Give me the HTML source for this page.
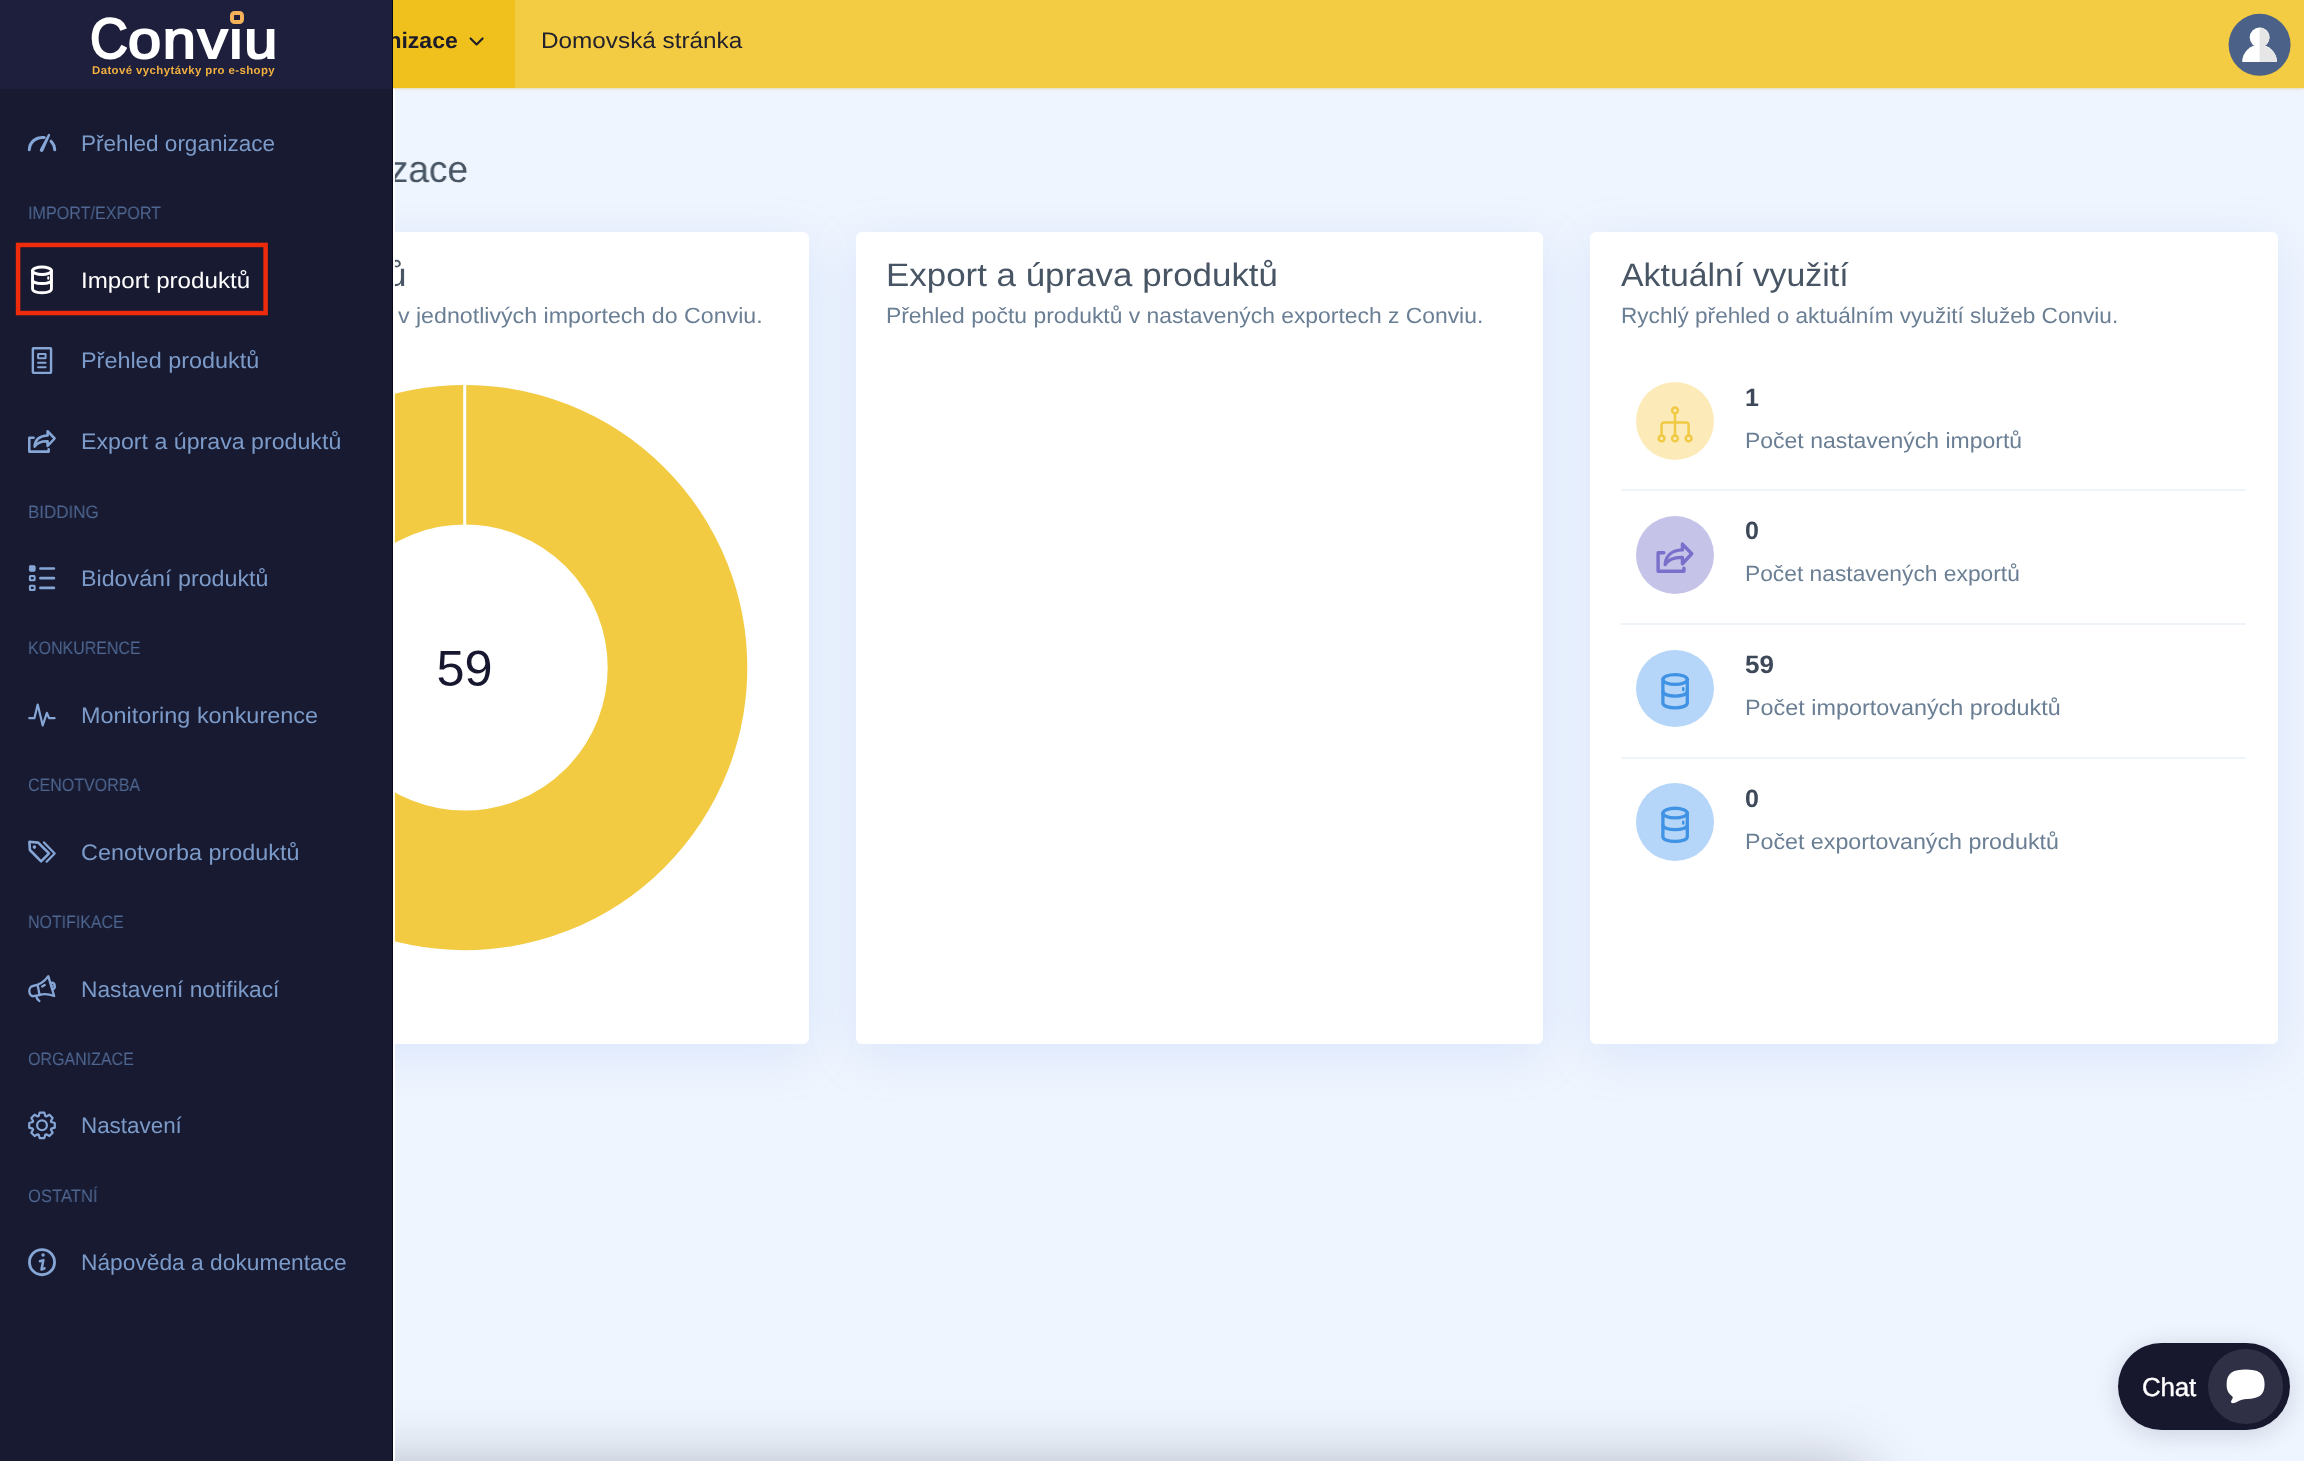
<!DOCTYPE html>
<html lang="cs">
<head>
<meta charset="utf-8">
<title>Conviu – Přehled organizace</title>
<style>
html,body{margin:0;padding:0;}
body{width:2304px;height:1461px;overflow:hidden;position:relative;background:#eff5fe;font-family:"Liberation Sans",sans-serif;}
.t{position:absolute;white-space:nowrap;line-height:1;will-change:transform;text-rendering:geometricPrecision;font-family:"Liberation Sans",sans-serif;}
#header{position:absolute;left:0;top:0;width:2304px;height:88px;background:#f4cc43;box-shadow:0 1px 2.5px rgba(215,195,120,.55);}
#tab{position:absolute;left:300px;top:0;width:214.5px;height:88px;background:#f0c11c;}
.card{position:absolute;top:232px;height:812px;width:687.5px;background:#fff;border-radius:6px;box-shadow:0 11px 50px rgba(120,160,238,.18);}
#sidebar{position:absolute;left:0;top:0;width:392.2px;height:1461px;background:#171a31;overflow:hidden;border-right:1px solid #07071c;}
#logo{position:absolute;left:0;top:0;width:393px;height:88.5px;background:#1e1f3d;}
.ic{position:absolute;left:0;top:0;}
.sep{position:absolute;left:1621px;width:625px;height:2px;background:#eff4fb;}
.circ{position:absolute;left:1636.1px;width:77.8px;height:77.6px;border-radius:50%;}
#chat{position:absolute;left:2117.5px;top:1342.8px;width:172.5px;height:87px;border-radius:44px;background:#17172e;box-shadow:0 4px 24px rgba(40,50,90,.18);}
#chatc{position:absolute;left:2208.3px;top:1349px;width:74.6px;height:74.6px;border-radius:50%;background:#2f3045;}
#botshadow{position:absolute;left:110px;top:1486px;width:1740px;height:30px;border-radius:40px;box-shadow:0 0 60px 22px rgba(60,65,85,.34);}
</style>
</head>
<body>
<div id="header"><div id="tab"></div></div>

<div class="card" style="left:121.5px"></div>
<div class="card" style="left:855.8px"></div>
<div class="card" style="left:1589.9px;width:688px"></div>

<!-- donut -->
<svg class="ic" width="2304" height="1461" viewBox="0 0 2304 1461">
  <circle cx="464.7" cy="667.6" r="212.8" fill="none" stroke="#f2cb43" stroke-width="139.6"/>
  <rect x="463.2" y="380" width="3" height="147" fill="#fff"/>
  <text x="464.5" y="686" text-anchor="middle" font-family="Liberation Sans, sans-serif" font-size="50.4" fill="#17172f">59</text>
  <!-- header chevron -->
  <path d="M470.6 38.4 L476.6 44.4 L482.6 38.4" fill="none" stroke="#1c1c2a" stroke-width="2.1" stroke-linecap="round" stroke-linejoin="round"/>
  <!-- avatar -->
  <circle cx="2259.6" cy="44.8" r="31" fill="#4c6188"/>
  <circle cx="2259.6" cy="37.4" r="9.9" fill="#fff"/>
  <path d="M2242.2 62 A17.4 17.4 0 0 1 2277 62 Z" fill="#fff"/>
  <path d="M2259.6 27.5 A9.9 9.9 0 0 1 2264.5 46 A17.4 17.4 0 0 1 2277 62 L2259.6 62 Z" fill="#e6e6e6"/>
</svg>

<div class="t" style="top:30px;font-size:22.4px;color:#23222c;left:541.30px;transform:scaleX(1.0856);transform-origin:0 0;">Domovská stránka</div>
<div class="t" style="top:30px;font-size:22.4px;color:#1c1c2a;font-weight:700;right:1846.30px;transform:scaleX(1.0272);transform-origin:100% 0;">Organizace</div>
<div class="t" style="top:151px;font-size:37.5px;color:#485564;right:1836.10px;transform:scaleX(0.9903);transform-origin:100% 0;">Přehled organizace</div>
<div class="t" style="top:259px;font-size:32.5px;color:#485564;right:1897.50px;transform:scaleX(1.1115);transform-origin:100% 0;">Import produktů</div>
<div class="t" style="top:305px;font-size:22.0px;color:#6a7e94;right:1541.50px;transform:scaleX(1.0540);transform-origin:100% 0;">Přehled počtu produktů v jednotlivých importech do Conviu.</div>
<div class="t" style="top:259px;font-size:32.5px;color:#485564;left:886.00px;transform:scaleX(1.0741);transform-origin:0 0;">Export a úprava produktů</div>
<div class="t" style="top:305px;font-size:22.0px;color:#6a7e94;left:886.30px;transform:scaleX(1.0391);transform-origin:0 0;">Přehled počtu produktů v nastavených exportech z Conviu.</div>
<div class="t" style="top:259px;font-size:32.5px;color:#485564;left:1621.00px;transform:scaleX(1.0413);transform-origin:0 0;">Aktuální využití</div>
<div class="t" style="top:305px;font-size:22.0px;color:#6a7e94;left:1620.60px;transform:scaleX(1.0268);transform-origin:0 0;">Rychlý přehled o aktuálním využití služeb Conviu.</div>
<div class="t" style="top:386px;font-size:25.0px;color:#3d4858;font-weight:700;left:1745.00px;">1</div>
<div class="t" style="top:430px;font-size:22.0px;color:#6a7e94;left:1744.90px;transform:scaleX(1.0442);transform-origin:0 0;">Počet nastavených importů</div>
<div class="t" style="top:519px;font-size:25.0px;color:#3d4858;font-weight:700;left:1745.00px;">0</div>
<div class="t" style="top:563px;font-size:22.0px;color:#6a7e94;left:1744.90px;transform:scaleX(1.0355);transform-origin:0 0;">Počet nastavených exportů</div>
<div class="t" style="top:653px;font-size:25.0px;color:#3d4858;font-weight:700;left:1745.00px;transform:scaleX(1.0427);transform-origin:0 0;">59</div>
<div class="t" style="top:697px;font-size:22.0px;color:#6a7e94;left:1744.90px;transform:scaleX(1.0627);transform-origin:0 0;">Počet importovaných produktů</div>
<div class="t" style="top:787px;font-size:25.0px;color:#3d4858;font-weight:700;left:1745.00px;">0</div>
<div class="t" style="top:831px;font-size:22.0px;color:#6a7e94;left:1744.90px;transform:scaleX(1.0562);transform-origin:0 0;">Počet exportovaných produktů</div>

<!-- card 3 rows -->
<div class="sep" style="top:489.3px"></div>
<div class="sep" style="top:622.9px"></div>
<div class="sep" style="top:756.6px"></div>
<div class="circ" style="top:382.3px;background:#fcebb9"></div>
<div class="circ" style="top:516.3px;background:#c6c3e8"></div>
<div class="circ" style="top:649.8px;background:#b5d6f8"></div>
<div class="circ" style="top:783.4px;background:#b5d6f8"></div>
<svg class="ic" width="2304" height="1461" viewBox="0 0 2304 1461" fill="none" stroke-linecap="round" stroke-linejoin="round">
  <!-- sitemap -->
  <g stroke="#f0c945" stroke-width="2.5">
    <circle cx="1675" cy="410.4" r="2.9"/>
    <circle cx="1661.6" cy="438.4" r="2.9"/>
    <circle cx="1675" cy="438.4" r="2.9"/>
    <circle cx="1688.6" cy="438.4" r="2.9"/>
    <path d="M1675 413.6 V435.2 M1661.6 435.2 V425 Q1661.6 422.4 1664.2 422.4 H1686 Q1688.6 422.4 1688.6 425 V435.2"/>
  </g>
  <!-- export purple: sidebar icon scaled 1.33 about its centre -->
  <g transform="translate(1675 557.9) scale(1.33) translate(-42 -441.6)" stroke="#7a70cc" stroke-width="2.55">
    <path d="M33.6 437.7 H29.3 V451.6 H48.7 V449.3"/>
    <path d="M47.6 431.2 L54.6 438.5 L47.6 446 V441.2 C41.2 441 37 443 34.6 446.6 C35 440.2 39.4 435.9 47.6 435.6 Z"/>
  </g>
  <!-- db blue x2 : sidebar icon scaled 1.29 about (42,279.85) -->
  <g id="dbb" transform="translate(1675.1 691.3) scale(1.29) translate(-42 -279.85)" stroke="#3f92e4" stroke-width="2.55">
    <ellipse cx="42" cy="270.7" rx="9.45" ry="3.75"/>
    <path d="M32.55 270.7 V289 C32.55 293.9 51.45 293.9 51.45 289 V270.7"/>
    <path d="M32.55 279.9 C32.55 284.8 51.45 284.8 51.45 279.9"/>
    <path d="M48.3 277.4 V278.8" stroke-width="1.9"/>
  </g>
  <g transform="translate(1675.1 824.9) scale(1.29) translate(-42 -279.85)" stroke="#3f92e4" stroke-width="2.55">
    <ellipse cx="42" cy="270.7" rx="9.45" ry="3.75"/>
    <path d="M32.55 270.7 V289 C32.55 293.9 51.45 293.9 51.45 289 V270.7"/>
    <path d="M32.55 279.9 C32.55 284.8 51.45 284.8 51.45 279.9"/>
    <path d="M48.3 277.4 V278.8" stroke-width="1.9"/>
  </g>
</svg>

<!-- chat -->
<div id="chat"></div><div id="chatc"></div>
<div class="t" style="left:2142px;top:1374.1px;font-size:26px;color:#fff;-webkit-text-stroke:0.4px #fff;letter-spacing:-0.2px">Chat</div>
<svg class="ic" width="2304" height="1461" viewBox="0 0 2304 1461">
  <path d="M2245.8 1369.4 C2258 1369.4 2264.6 1372.5 2264.6 1384.3 C2264.6 1395.5 2258.5 1398.6 2247 1399 C2243 1399.2 2240.5 1399.8 2237.6 1401.6 C2235 1403.2 2232.2 1404 2231.2 1402.6 C2230.4 1401.4 2231.8 1400 2232.6 1398.2 C2233 1397.2 2232.6 1396.6 2231.6 1395.8 C2228 1393.2 2226.6 1389.6 2226.6 1384.3 C2226.6 1372.5 2233.6 1369.4 2245.8 1369.4 Z" fill="#fff"/>
</svg>

<div id="botshadow"></div>

<div style="position:absolute;left:393px;top:89px;width:2.3px;height:1372px;background:rgba(255,255,255,.92)"></div>
<!-- sidebar -->
<div id="sidebar">
  <div id="logo"></div>
  <div class="t" id="brand" style="left:89.5px;top:10.5px;font-size:57px;color:#fff;-webkit-text-stroke:2px #fff;"><span style="display:inline-block;transform:scaleX(0.92);transform-origin:0 0">C</span><span style="display:inline-block;font-size:53px;letter-spacing:1.6px;transform:scaleX(1.122);transform-origin:0 0;margin-left:-3.1px">onviu</span></div>
  <div style="position:absolute;left:229px;top:9px;width:16px;height:18px;background:#1e1f3d"></div>
  <div style="position:absolute;left:229.6px;top:10.8px;width:6px;height:5.4px;border:4px solid #f3b158;border-radius:4.5px"></div>
  <div class="t" style="left:92px;top:65.5px;font-size:11.4px;font-weight:700;color:#f2b03e;letter-spacing:0.42px">Datové vychytávky pro e-shopy</div>
<div class="t" style="top:133px;font-size:22.4px;color:#7c9bc9;left:81.00px;transform:scaleX(1.0055);transform-origin:0 0;">Přehled organizace</div>
<div class="t" style="top:270px;font-size:22.4px;color:#ffffff;left:81.00px;transform:scaleX(1.0784);transform-origin:0 0;">Import produktů</div>
<div class="t" style="top:350px;font-size:22.4px;color:#7c9bc9;left:81.00px;transform:scaleX(1.0449);transform-origin:0 0;">Přehled produktů</div>
<div class="t" style="top:431px;font-size:22.4px;color:#7c9bc9;left:81.00px;transform:scaleX(1.0352);transform-origin:0 0;">Export a úprava produktů</div>
<div class="t" style="top:568px;font-size:22.4px;color:#7c9bc9;left:81.00px;transform:scaleX(1.0388);transform-origin:0 0;">Bidování produktů</div>
<div class="t" style="top:705px;font-size:22.4px;color:#7c9bc9;left:81.00px;transform:scaleX(1.0462);transform-origin:0 0;">Monitoring konkurence</div>
<div class="t" style="top:842px;font-size:22.4px;color:#7c9bc9;left:81.00px;transform:scaleX(1.0444);transform-origin:0 0;">Cenotvorba produktů</div>
<div class="t" style="top:979px;font-size:22.4px;color:#7c9bc9;left:81.00px;transform:scaleX(1.0153);transform-origin:0 0;">Nastavení notifikací</div>
<div class="t" style="top:1115px;font-size:22.4px;color:#7c9bc9;left:81.00px;">Nastavení</div>
<div class="t" style="top:1252px;font-size:22.4px;color:#7c9bc9;left:81.00px;transform:scaleX(1.0167);transform-origin:0 0;">Nápověda a dokumentace</div>
<div class="t" style="top:204px;font-size:18.0px;color:#4f6791;left:28.00px;transform:scaleX(0.8965);transform-origin:0 0;">IMPORT/EXPORT</div>
<div class="t" style="top:503px;font-size:18.0px;color:#4f6791;left:28.00px;transform:scaleX(0.9425);transform-origin:0 0;">BIDDING</div>
<div class="t" style="top:639px;font-size:18.0px;color:#4f6791;left:28.00px;transform:scaleX(0.8864);transform-origin:0 0;">KONKURENCE</div>
<div class="t" style="top:776px;font-size:18.0px;color:#4f6791;left:28.00px;transform:scaleX(0.8895);transform-origin:0 0;">CENOTVORBA</div>
<div class="t" style="top:913px;font-size:18.0px;color:#4f6791;left:28.00px;transform:scaleX(0.8860);transform-origin:0 0;">NOTIFIKACE</div>
<div class="t" style="top:1050px;font-size:18.0px;color:#4f6791;left:28.00px;transform:scaleX(0.8890);transform-origin:0 0;">ORGANIZACE</div>
<div class="t" style="top:1187px;font-size:18.0px;color:#4f6791;left:28.00px;transform:scaleX(0.9238);transform-origin:0 0;">OSTATNÍ</div>
  <svg class="ic" width="393" height="1461" viewBox="0 0 393 1461" fill="none" stroke="#86a6d6" stroke-linecap="round" stroke-linejoin="round">
    <rect x="18.1" y="244.95" width="247.5" height="68.1" stroke="#ee2c0c" stroke-width="4.5" stroke-linejoin="miter" fill="none"/>
    <!-- gauge -->
    <g stroke-width="3">
      <path d="M29.3 149.7 A12.7 12.7 0 0 1 44.2 137.6"/>
      <path d="M51 141.2 A12.7 12.7 0 0 1 54.7 149.7"/>
    </g>
    <path d="M39.99 149.17 L47.92 134.47 A1.2 1.2 0 0 1 50.08 135.53 L43.41 150.83 A1.9 1.9 0 0 1 39.99 149.17 Z" fill="#86a6d6" stroke="none"/>
    <!-- database (active, white) -->
    <g stroke="#fff" stroke-width="2.9">
      <ellipse cx="42" cy="270.7" rx="9.45" ry="3.75"/>
      <path d="M32.55 270.7 V289 C32.55 293.9 51.45 293.9 51.45 289 V270.7"/>
      <path d="M32.55 279.9 C32.55 284.8 51.45 284.8 51.45 279.9"/>
      <path d="M48.3 277.4 V278.8" stroke-width="2.1"/>
    </g>
    <!-- document -->
    <rect x="32.85" y="348.2" width="18.2" height="24.7" rx="0.6" stroke-width="2.4"/>
    <rect x="38.1" y="354" width="7.5" height="4.3" rx="0.4" stroke-width="2"/>
    <path d="M38 362.8 H45.6 M38 367.2 H45.6" stroke-width="2" />
    <!-- export -->
    <g stroke-width="2.55">
      <path d="M33.6 437.7 H29.3 V451.6 H48.7 V449.3"/>
      <path d="M47.6 431.2 L54.6 438.5 L47.6 446 V441.2 C41.2 441 37 443 34.6 446.6 C35 440.2 39.4 435.9 47.6 435.6 Z"/>
    </g>
    <!-- list -->
    <rect x="29.4" y="565.8" width="5.7" height="5.4" rx="0.8" fill="#86a6d6" stroke-width="1"/>
    <rect x="29.9" y="576" width="4.7" height="4.3" rx="0.5" stroke-width="2"/>
    <rect x="29.9" y="585.7" width="4.7" height="4.4" rx="0.5" stroke-width="2"/>
    <path d="M40.4 568.5 H53.9 M40.4 578.2 H53.9 M40.4 587.9 H53.9" stroke-width="2.7"/>
    <!-- pulse -->
    <path d="M29.3 718.2 H34.4 L37.7 704.6 L42.7 725.4 L46.9 712.8 L49.1 718.2 H54.6" stroke-width="2.2"/>
    <!-- tags -->
    <path d="M29.4 841.8 L38.2 842.6 L49 853.4 L41.1 861.3 L29.9 850 Z" stroke-width="2.6"/>
    <circle cx="34.4" cy="847.1" r="1.8" fill="#86a6d6" stroke="none"/>
    <path d="M44 842.4 L54.7 853.4 L46.6 861.7" stroke-width="2.2"/>
    <!-- megaphone -->
    <g stroke-width="2.35">
      <path d="M48.3 976.2 L54.1 996 C48 993.6 42 994 38.8 995.2 L33.4 996.2 A3.8 5.1 0 0 1 32.8 986 C38 985.2 44 982.4 48.3 976.2 Z"/>
      <path d="M37.6 985 L39.6 995"/>
      <path d="M36.3 996.6 C36.8 998.8 37.8 1000.2 39.4 1001"/>
      <path d="M51.3 982.8 C55.3 982.2 55.9 988.4 52.8 989.2"/>
      <path d="M42.2 986.5 L44.7 985"/>
      <circle cx="52.7" cy="985.9" r="0.9" fill="#86a6d6" stroke="none"/>
    </g>
    <!-- gear -->
    <path d="M38.70 1116.02 L39.70 1112.56 L44.30 1112.56 L45.30 1116.02 L46.27 1116.42 L49.42 1114.68 L52.67 1117.93 L50.93 1121.08 L51.33 1122.05 L54.79 1123.05 L54.79 1127.65 L51.33 1128.65 L50.93 1129.62 L52.67 1132.77 L49.42 1136.02 L46.27 1134.28 L45.30 1134.68 L44.30 1138.14 L39.70 1138.14 L38.70 1134.68 L37.73 1134.28 L34.58 1136.02 L31.33 1132.77 L33.07 1129.62 L32.67 1128.65 L29.21 1127.65 L29.21 1123.05 L32.67 1122.05 L33.07 1121.08 L31.33 1117.93 L34.58 1114.68 L37.73 1116.42 Z" stroke-width="2.2"/>
    <circle cx="42" cy="1125.35" r="4.9" stroke-width="2.2"/>
    <!-- info -->
    <circle cx="42" cy="1262.2" r="12.55" stroke-width="2.85"/>
    <circle cx="43.05" cy="1254.9" r="1.75" fill="#86a6d6" stroke="none"/>
    <path d="M39.9 1261.2 L43.4 1260.1 L41.5 1269.5 L44.5 1268.3" stroke-width="2.5"/>
  </svg>
</div>
</body>
</html>
